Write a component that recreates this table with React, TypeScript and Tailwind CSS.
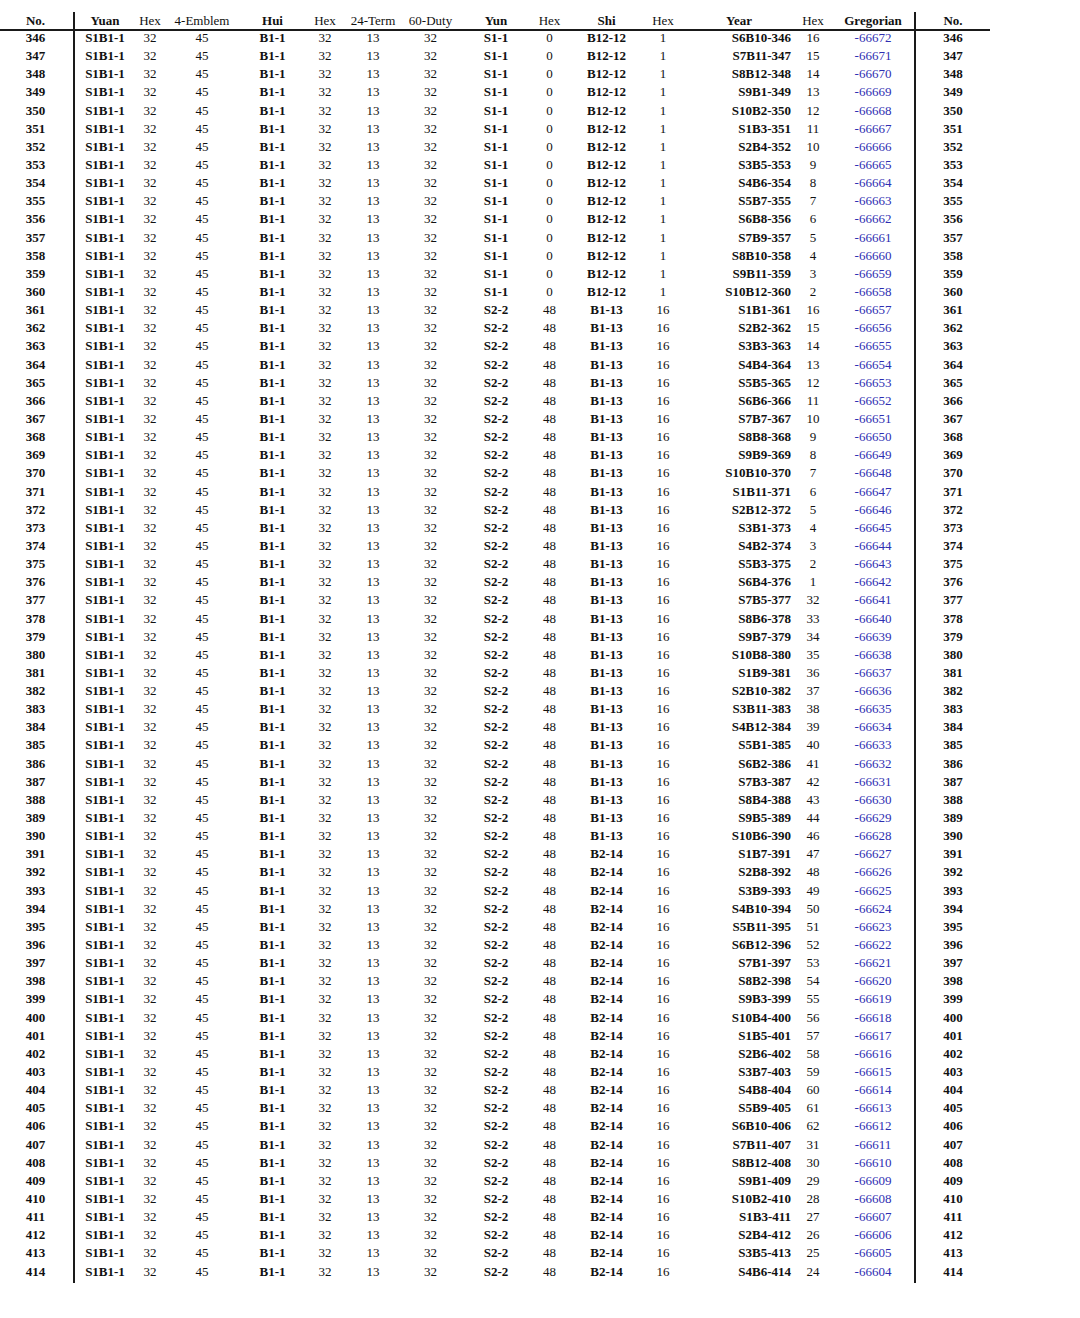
const yearHex = [
  16, 15, 14, 13, 12, 11, 10, 9, 8, 7, 6, 5, 4, 3, 2,
  16, 15, 14, 13, 12, 11, 10, 9, 8, 7, 6, 5, 4, 3, 2, 1,
  32, 33, 34, 35, 36, 37, 38, 39, 40, 41, 42, 43, 44, 46,
  47, 48, 49, 50, 51, 52, 53, 54, 55, 56, 57, 58, 59, 60, 61, 62,
  31, 30, 29, 28, 27, 26, 25, 24,
]

type Row = {
  no: number
  yun: string
  yunHex: string
  shi: string
  shiHex: string
  year: string
  yearHex: number
  greg: string
}

const rows: Row[] = yearHex.map((hex, i) => {
  const no = 346 + i
  const s = ((no - 1) % 10) + 1
  const b = ((no - 1) % 12) + 1
  const early = no <= 360
  return {
    no,
    yun: early ? 'S1-1' : 'S2-2',
    yunHex: early ? '0' : '48',
    shi: early ? 'B12-12' : no <= 390 ? 'B1-13' : 'B2-14',
    shiHex: early ? '1' : '16',
    year: `S${s}B${b}-${no}`,
    yearHex: hex,
    greg: `-${67018 - no}`,
  }
})

export default function App() {
  return (
    <div
      className="min-h-[1318px] w-[1080px] bg-white pt-[12px] text-[13px] text-[#111111]"
      style={{ fontFamily: '"Liberation Serif", "Times New Roman", serif' }}
    >
      <div className="w-[990px]">
        {/* Header */}
        <div className="flex h-[19px] border-b-2 border-[#1a1a1a] leading-[17px]">
          <div className="w-[75px] border-r-2 border-[#1a1a1a] pr-[2px] text-center font-bold">No.</div>
          <div className="w-[60px] text-center font-bold">Yuan</div>
          <div className="w-[30px] text-center">Hex</div>
          <div className="w-[74px] text-center">4-Emblem</div>
          <div className="w-[67px] text-center font-bold">Hui</div>
          <div className="w-[38px] text-center">Hex</div>
          <div className="w-[58px] text-center">24-Term</div>
          <div className="w-[57px] text-center">60-Duty</div>
          <div className="w-[74px] text-center font-bold">Yun</div>
          <div className="w-[33px] text-center">Hex</div>
          <div className="w-[81px] text-center font-bold">Shi</div>
          <div className="w-[32px] text-center">Hex</div>
          <div className="w-[113px] pl-[7px] text-center font-bold">Year</div>
          <div className="w-[42px] text-center">Hex</div>
          <div className="w-[82px] border-r-2 border-[#1a1a1a] pr-[2px] text-center font-bold">Gregorian</div>
          <div className="w-[74px] text-center font-bold">No.</div>
        </div>

        {/* Rows */}
        {rows.map((r) => (
          <div key={r.no} className="flex h-[18.15px] leading-[13.2px]">
            <div className="w-[75px] border-r-2 border-[#1a1a1a] pr-[2px] text-center font-bold">{r.no}</div>
            <div className="w-[60px] text-center font-bold">S1B1-1</div>
            <div className="w-[30px] text-center">32</div>
            <div className="w-[74px] text-center">45</div>
            <div className="w-[67px] text-center font-bold">B1-1</div>
            <div className="w-[38px] text-center">32</div>
            <div className="w-[58px] text-center">13</div>
            <div className="w-[57px] text-center">32</div>
            <div className="w-[74px] text-center font-bold">{r.yun}</div>
            <div className="w-[33px] text-center">{r.yunHex}</div>
            <div className="w-[81px] text-center font-bold">{r.shi}</div>
            <div className="w-[32px] text-center">{r.shiHex}</div>
            <div className="w-[113px] pr-[1px] text-right font-bold">{r.year}</div>
            <div className="w-[42px] text-center">{r.yearHex}</div>
            <div className="w-[82px] border-r-2 border-[#1a1a1a] pr-[2px] text-center text-[#2e2eb2]">{r.greg}</div>
            <div className="w-[74px] text-center font-bold">{r.no}</div>
          </div>
        ))}
      </div>
    </div>
  )
}
